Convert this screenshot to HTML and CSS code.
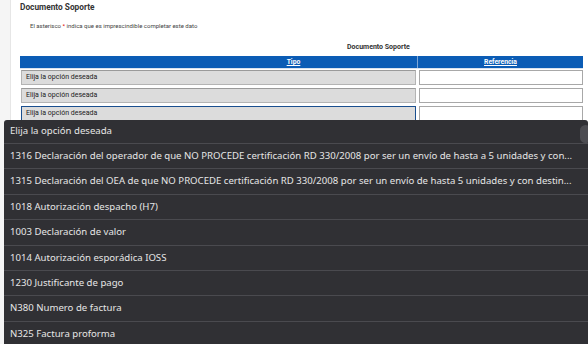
FILE: index.html
```html
<!DOCTYPE html>
<html lang="es">
<head>
<meta charset="utf-8">
<link rel="stylesheet" href="styles.css">
</head>
<body>
<div class="shell">
  <div class="side"></div>
  <div class="content">
    <h1 class="title">Documento Soporte</h1>
    <p class="note">El asterisco <span class="req">*</span> indica que es imprescindible completar este dato</p>
    <div class="caption">Documento Soporte</div>
    <div class="table">
      <div class="head">
        <div class="th th-tipo"><u>Tipo</u></div>
        <div class="th th-ref"><u>Referencia</u></div>
      </div>
      <div class="row">
        <div class="sel">Elija la opción deseada</div>
        <div class="inp"></div>
      </div>
      <div class="row">
        <div class="sel">Elija la opción deseada</div>
        <div class="inp"></div>
      </div>
      <div class="row">
        <div class="sel focus">Elija la opción deseada</div>
        <div class="inp"></div>
      </div>
    </div>
  </div>
</div>
<div class="menu">
  <div class="opt first">Elija la opción deseada</div>
  <div class="opt">1316 Declaración del operador de que NO PROCEDE certificación RD 330/2008 por ser un envío de hasta a 5 unidades y con...</div>
  <div class="opt">1315 Declaración del OEA de que NO PROCEDE certificación RD 330/2008 por ser un envío de hasta 5 unidades y con destin...</div>
  <div class="opt">1018 Autorización despacho (H7)</div>
  <div class="opt">1003 Declaración de valor</div>
  <div class="opt">1014 Autorización esporádica IOSS</div>
  <div class="opt">1230 Justificante de pago</div>
  <div class="opt">N380 Numero de factura</div>
  <div class="opt">N325 Factura proforma</div>
  <div class="thumb"></div>
</div>
</body>
</html>
```
FILE: styles.css
```css
html, body {
  margin: 0;
  padding: 0;
  background: #ffffff;
  width: 588px;
  height: 344px;
  overflow: hidden;
  font-family: Roboto, "Liberation Sans", Arial, sans-serif;
}
.shell {
  display: flex;
  height: 344px;
}
.side {
  width: 10px;
  background: #f5f5f5;
  border-right: 1px solid #e6e6e6;
  flex: none;
}
.content {
  flex: 1;
  padding: 0 5px 0 9px;
}
.title {
  margin: 2px 0 0 0;
  font-size: 8.3px;
  line-height: 10px;
  font-weight: bold;
  color: #333;
}
.note {
  margin: 10px 0 0 10px;
  font-size: 6px;
  line-height: 8px;
  color: #444;
}
.req { color: #d00; }
.caption {
  margin: 13px 0 0 327px;
  font-size: 7px;
  line-height: 9px;
  font-weight: bold;
  color: #333;
}
.table {
  margin-top: 4px;
}
.head {
  display: grid;
  grid-template-columns: 397px 1fr;
  background: #0b5cb5;
  height: 12px;
  border-bottom: 1px solid #d8e2ee;
  color: #fff;
  font-size: 6.8px;
  line-height: 12px;
  font-weight: bold;
}
.th { text-align: center; }
.th-tipo { padding-left: 150px; }
.th-ref { border-left: 1px solid #7fa7d6; }
.row {
  display: grid;
  grid-template-columns: 395px 164px;
  column-gap: 3px;
  margin-top: 1px;
  height: 17px;
  align-items: start;
  padding-left: 1px;
}
.sel {
  height: 15px;
  box-sizing: border-box;
  background: #dcdcdc;
  border: 1px solid #b4b4b4;
  border-top-color: #9a9a9a;
  font-size: 7px;
  line-height: 13px;
  padding-left: 4px;
  color: #222;
}
.sel.focus {
  border-color: #1a4f8f;
  border-top-width: 1.5px;
}
.inp {
  height: 15px;
  box-sizing: border-box;
  background: #fff;
  border: 1px solid #a8a8a8;
}
.menu {
  position: absolute;
  left: 4px;
  top: 120px;
  right: 0;
  bottom: 0;
  background: #303034;
  border-radius: 3px 3px 0 0;
  overflow: hidden;
  font-family: "Noto Sans", "Open Sans", sans-serif;
  color: #e6e6e6;
  font-size: 9.6px;
}
.opt {
  box-sizing: border-box;
  height: 25.4px;
  line-height: 24px;
  padding: 0 4px 0 6px;
  border-top: 1px solid #4a4a4f;
  white-space: nowrap;
}
.opt.first {
  height: 23px;
  line-height: 22px;
  border-top: 0;
}
.thumb {
  position: absolute;
  right: -3px;
  top: 5px;
  width: 11px;
  height: 18px;
  border-radius: 6px;
  background: #4c4c51;
}
```
